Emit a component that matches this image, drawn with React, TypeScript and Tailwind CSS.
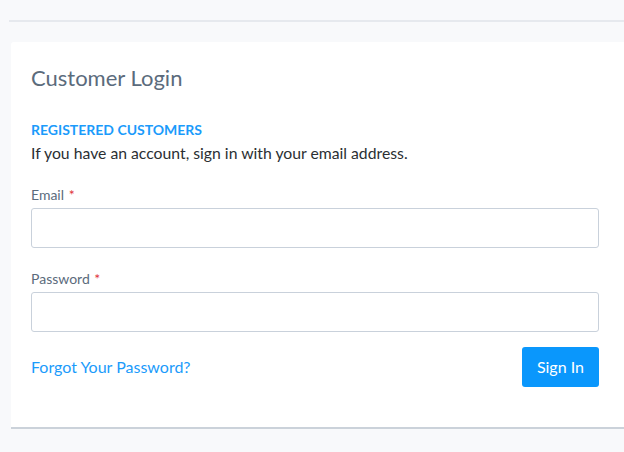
import React from 'react';

const App = () => {
  return (
    <div className="w-[624px] h-[452px] overflow-hidden bg-[#f8f9fb] font-['Lato','Liberation_Sans',sans-serif]">
      {/* top rule */}
      <div className="pt-[20px] pl-[9px]">
        <div className="h-[2px] bg-[#e6e9ee]" />
      </div>

      {/* Login card */}
      <div className="ml-[11px] mt-[20px] bg-white rounded-tl-[3px] shadow-[0_2px_0_#cbd2da] pl-[20px] pr-[25px] pt-[23px] pb-[40px]">
        <h1 className="text-[22px] leading-[1.2] text-[#5b6b7c]">Customer Login</h1>

        <div className="mt-[30px]">
          <h2 className="text-[14px] leading-[17px] font-bold text-[#1b9bfb]">REGISTERED CUSTOMERS</h2>
          <p className="text-[15.75px] leading-[22px] text-[#2b2f33] mt-[4px]">
            If you have an account, sign in with your email address.
          </p>
        </div>

        <div className="mt-[22px]">
          <label className="block text-[14px] leading-[18px] text-[#5b6b7c]">
            Email <span className="ml-[1px] text-[#e0323a]">*</span>
          </label>
          <input className="mt-[4px] block w-full h-[40px] border border-[#c9d1db] rounded-[3px] bg-white outline-none" />
        </div>

        <div className="mt-[22px]">
          <label className="block text-[14px] leading-[18px] text-[#5b6b7c]">
            Password <span className="ml-[1px] text-[#e0323a]">*</span>
          </label>
          <input
            type="password"
            className="mt-[4px] block w-full h-[40px] border border-[#c9d1db] rounded-[3px] bg-white outline-none"
          />
        </div>

        <div className="mt-[15px] flex items-center justify-between">
          <a className="text-[16px] text-[#1b9bfb] cursor-pointer">Forgot Your Password?</a>
          <button className="h-[40px] px-[15px] rounded-[3px] bg-[#0a97fc] text-white text-[16px]">
            Sign In
          </button>
        </div>
      </div>
    </div>
  );
};

export default App;
